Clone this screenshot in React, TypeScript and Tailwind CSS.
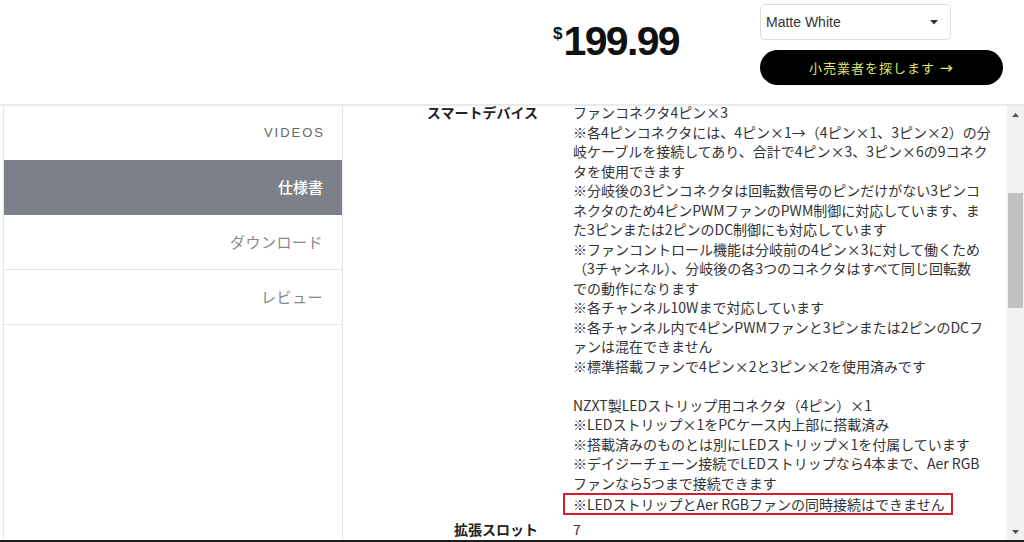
const specLines = [
  "ファンコネクタ4ピン×3",
  "※各4ピンコネクタには、4ピン×1→（4ピン×1、3ピン×2）の分",
  "岐ケーブルを接続してあり、合計で4ピン×3、3ピン×6の9コネク",
  "タを使用できます",
  "※分岐後の3ピンコネクタは回転数信号のピンだけがない3ピンコ",
  "ネクタのため4ピンPWMファンのPWM制御に対応しています、ま",
  "た3ピンまたは2ピンのDC制御にも対応しています",
  "※ファンコントロール機能は分岐前の4ピン×3に対して働くため",
  "（3チャンネル）、分岐後の各3つのコネクタはすべて同じ回転数",
  "での動作になります",
  "※各チャンネル10Wまで対応しています",
  "※各チャンネル内で4ピンPWMファンと3ピンまたは2ピンのDCフ",
  "ァンは混在できません",
  "※標準搭載ファンで4ピン×2と3ピン×2を使用済みです",
  "",
  "NZXT製LEDストリップ用コネクタ（4ピン）×1",
  "※LEDストリップ×1をPCケース内上部に搭載済み",
  "※搭載済みのものとは別にLEDストリップ×1を付属しています",
  "※デイジーチェーン接続でLEDストリップなら4本まで、Aer RGB",
  "ファンなら5つまで接続できます",
];

const navItems = [
  { label: "VIDEOS", active: false },
  { label: "仕様書", active: true },
  { label: "ダウンロード", active: false },
  { label: "レビュー", active: false },
];

function Header() {
  return (
    <header className="flex h-[106px] shrink-0 border-b-2 border-[#ebebeb] pl-[553px]">
      <div className="mt-[24px] flex items-start font-['Liberation_Sans',sans-serif] font-bold text-[#111]">
        <span className="mt-[1px] text-[17px] leading-none">$</span>
        <span className="ml-[1px] text-[41px] leading-[34px] tracking-[-0.04em]">199.99</span>
      </div>
      <div className="ml-auto mr-[21px] mt-[4px] flex w-[243px] flex-col gap-[10px]">
        <div className="flex h-[36px] w-[191px] items-center justify-between rounded-[5px] border border-[#dedede] pl-[5px] pr-[12px] font-['Liberation_Sans',sans-serif] text-[14px] text-[#333]">
          <span>Matte White</span>
          <svg width="8" height="5" viewBox="0 0 8 5">
            <path d="M0 0h8L4 4.5z" fill="#333" />
          </svg>
        </div>
        <button className="flex h-[35px] w-full items-center justify-center gap-[5px] rounded-full bg-black font-['Noto_Sans_CJK_JP',sans-serif] text-[13px] tracking-[1px] text-[#dce36f]">
          <span>小売業者を探します</span>
          <span className="font-bold">→</span>
        </button>
      </div>
    </header>
  );
}

function Sidebar() {
  return (
    <aside className="ml-[3px] w-[340px] shrink-0 border-x border-[#e6e6e6] font-['Noto_Sans_CJK_JP',sans-serif]">
      {navItems.map((item, i) => (
        <div
          key={item.label}
          className={
            item.active
              ? "flex h-[55px] items-center justify-end bg-[#7c8189] pr-[19px] text-[15px] font-medium text-white"
              : i === 0
                ? "flex h-[54px] items-center justify-end pr-[17px] font-['Liberation_Sans',sans-serif] text-[13px] tracking-[2px] text-[#666]"
                : "flex h-[55px] items-center justify-end border-b border-[#e6e6e6] pr-[19px] text-[15px] tracking-[0.5px] text-[#888]"
          }
        >
          {item.label}
        </div>
      ))}
    </aside>
  );
}

function Scrollbar() {
  return (
    <div className="flex w-[17px] shrink-0 flex-col items-center bg-[#f1f1f1]">
      <div className="flex h-[17px] w-full items-center justify-center">
        <svg width="7" height="4" viewBox="0 0 7 4">
          <path d="M3.5 0L7 4H0z" fill="#505050" />
        </svg>
      </div>
      <div className="mt-[70px] h-[115px] w-[15px] bg-[#c1c1c1]" />
      <div className="flex-1" />
      <div className="flex h-[17px] w-full items-center justify-center">
        <svg width="7" height="4" viewBox="0 0 7 4">
          <path d="M0 0h7L3.5 4z" fill="#505050" />
        </svg>
      </div>
    </div>
  );
}

function SpecTable() {
  return (
    <main className="-mt-[3px] flex-1 font-['Noto_Sans_CJK_JP',sans-serif] text-[14px] text-[#333]">
      <div className="flex gap-[35px]">
        <div className="w-[195px] shrink-0 text-right font-bold leading-[19.5px] text-[#222]">スマートデバイス</div>
        <div className="leading-[19.5px]">
          {specLines.map((line, i) => (
            <div key={i} className="h-[19.5px] whitespace-nowrap">
              {line}
            </div>
          ))}
          <div className="-ml-[10px] w-fit whitespace-nowrap border-2 border-[#d21f2c] pl-[8px] pr-[6px] leading-[18px]">
            ※LEDストリップとAer RGBファンの同時接続はできません
          </div>
        </div>
      </div>
      <div className="mt-[5px] flex gap-[35px] leading-[19.5px]">
        <div className="w-[195px] shrink-0 text-right font-bold text-[#222]">拡張スロット</div>
        <div>7</div>
      </div>
    </main>
  );
}

export default function App() {
  return (
    <div className="flex h-[542px] w-[1024px] flex-col overflow-hidden bg-white">
      <Header />
      <div className="flex min-h-0 flex-1">
        <Sidebar />
        <SpecTable />
        <Scrollbar />
      </div>
      <div className="h-[2px] shrink-0 bg-[#1c1c1c]" />
    </div>
  );
}
